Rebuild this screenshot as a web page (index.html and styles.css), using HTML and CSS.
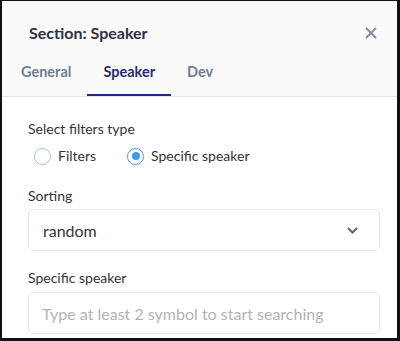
FILE: index.html
```html
<!DOCTYPE html>
<html lang="en">
<head>
    <meta charset="UTF-8">
    <meta name="viewport" content="width=device-width, initial-scale=1.0">
    <title>Section: Speaker</title>
    <link rel="stylesheet" href="styles.css">
</head>
<body>
    <div class="frame">
        <div class="header">
            <div class="title-row">
                <h1>Section: Speaker</h1>
                <button class="close-button" aria-label="Close">
                    <svg width="12" height="12" viewBox="0 0 12 12">
                        <path d="M1 1 L11 11 M11 1 L1 11" stroke="#7d8da4" stroke-width="1.8" fill="none"/>
                    </svg>
                </button>
            </div>
            <div class="tabs">
                <div class="tab">General</div>
                <div class="tab active">Speaker</div>
                <div class="tab">Dev</div>
            </div>
        </div>

        <div class="content">
            <label>Select filters type</label>
            <div class="radio-group">
                <div class="radio-option">
                    <span class="radio"></span>
                    <span>Filters</span>
                </div>
                <div class="radio-option">
                    <span class="radio checked"></span>
                    <span>Specific speaker</span>
                </div>
            </div>

            <label>Sorting</label>
            <div class="select-box">
                <span>random</span>
                <svg width="11" height="7" viewBox="0 0 11 7">
                    <path d="M1 1 L5.5 5.5 L10 1" stroke="#56667d" stroke-width="2" fill="none"/>
                </svg>
            </div>

            <label>Specific speaker</label>
            <input type="text" placeholder="Type at least 2 symbol to start searching">
        </div>
    </div>
</body>
</html>
```

FILE: styles.css
```css
body {
    font-family: Lato, 'Open Sans', sans-serif;
    margin: 0;
    color: #333;
}

.frame {
    width: 400px;
    height: 341px;
    box-sizing: border-box;
    border-style: solid;
    border-color: #111;
    border-width: 1px 3px 3px 2px;
    background-color: white;
    overflow: hidden;
}

.header {
    background-color: #fafafa;
    border-bottom: 1px solid #e4e4e4;
    padding: 0 3px;
}

.title-row {
    display: flex;
    align-items: center;
    justify-content: space-between;
    padding: 22px 17px 0 24px;
    height: 20px;
    margin-bottom: 7px;
}

h1 {
    font-size: 16px;
    font-weight: 700;
    color: #2d3140;
    margin: 0;
    line-height: 20px;
}

.close-button {
    background: none;
    border: none;
    padding: 0;
    width: 12px;
    height: 12px;
    display: flex;
    cursor: pointer;
}

.tabs {
    display: flex;
}

.tab {
    padding: 0 16px;
    height: 44px;
    line-height: 44px;
    font-size: 14.5px;
    font-weight: 700;
    color: #6f7d97;
    border-bottom: 2px solid transparent;
}

.tab.active {
    color: #262e6c;
    border-bottom-color: #1f2b7b;
}

.content {
    padding: 22px 17px 0 26px;
}

label {
    display: block;
    font-size: 14px;
    line-height: 20px;
    color: #333;
}

.radio-group {
    display: flex;
    gap: 31px;
    margin: 7px 0 20px 6px;
}

.radio-option {
    display: flex;
    align-items: center;
    gap: 7px;
    font-size: 14px;
    line-height: 20px;
}

.radio {
    width: 17px;
    height: 17px;
    box-sizing: border-box;
    border: 1.5px solid #a9bedb;
    border-radius: 50%;
    display: flex;
    align-items: center;
    justify-content: center;
}

.radio.checked {
    border-color: #3b9ae0;
}

.radio.checked::after {
    content: "";
    width: 8px;
    height: 8px;
    border-radius: 50%;
    background-color: #3b9ae0;
}

.select-box {
    display: flex;
    align-items: center;
    justify-content: space-between;
    height: 42px;
    box-sizing: border-box;
    margin: 3px 0 17px 0;
    padding: 0 21px 0 14px;
    border: 1px solid #e6e6e6;
    border-radius: 5px;
    font-size: 16px;
    color: #333;
}

input[type="text"] {
    display: block;
    width: 100%;
    height: 42px;
    box-sizing: border-box;
    margin-top: 4px;
    padding: 0 13px;
    border: 1px solid #e6e6e6;
    border-radius: 5px;
    font-family: Lato, 'Open Sans', sans-serif;
    font-size: 16px;
    color: #333;
}

input::placeholder {
    color: #b3b3b3;
}
```
